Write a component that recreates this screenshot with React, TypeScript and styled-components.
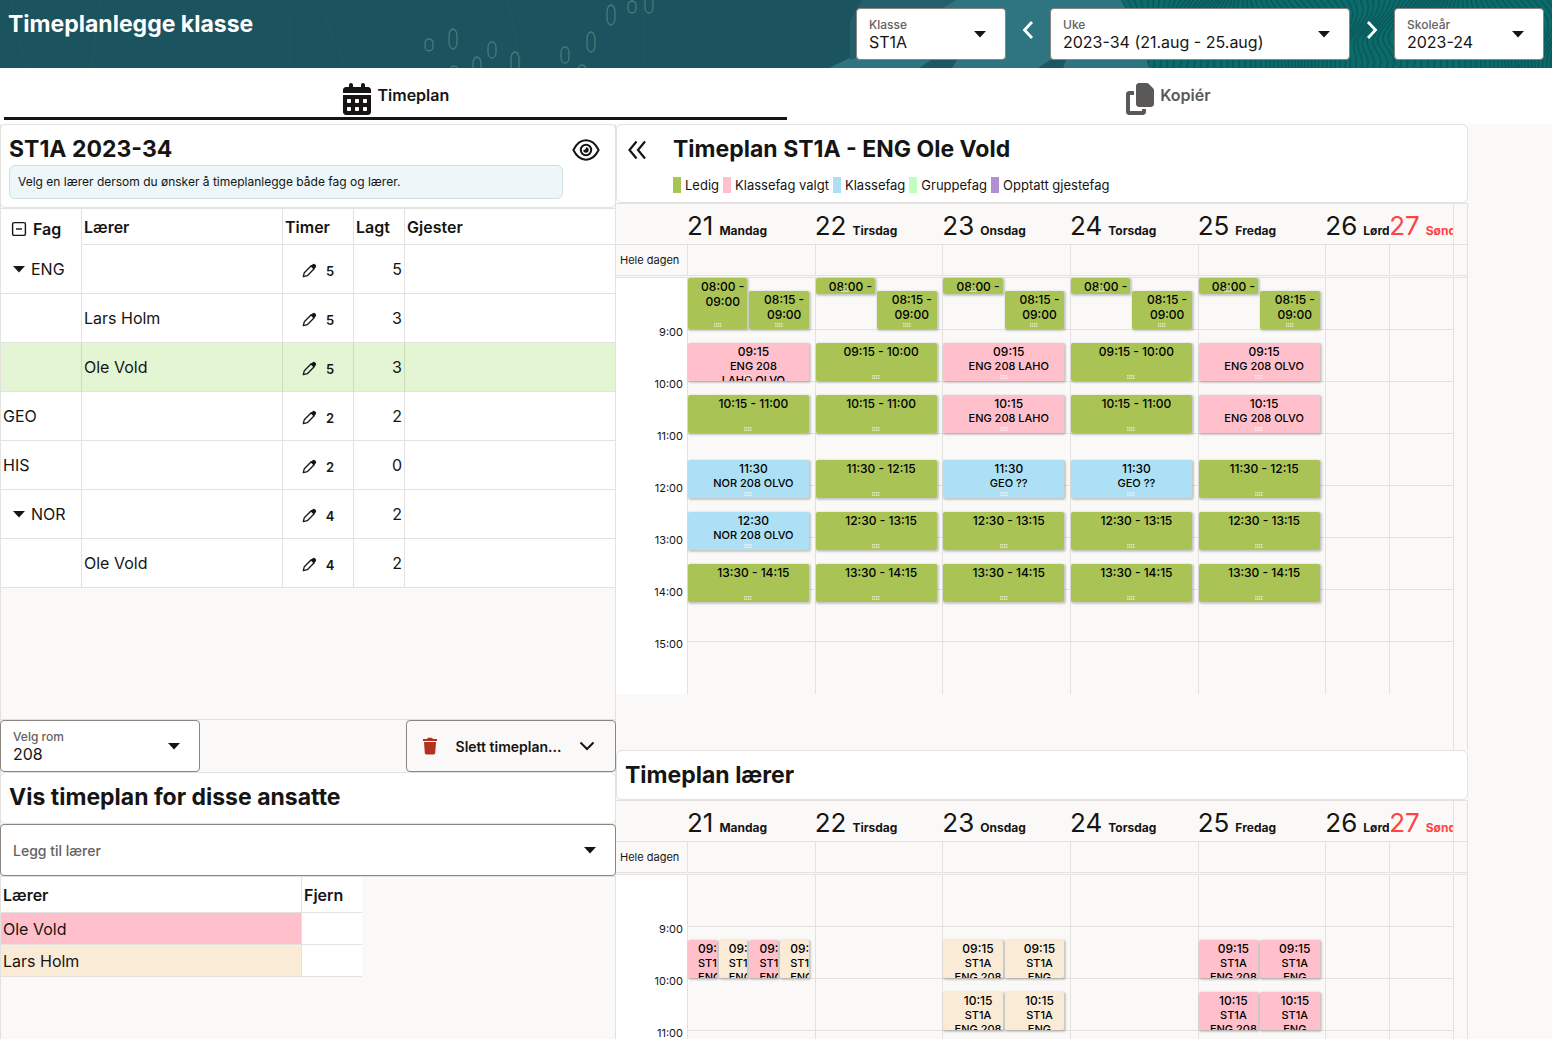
import React, { useId, useState } from "react";
import styled, { createGlobalStyle, css } from "styled-components";
import { FaCalendarDays, FaCopy } from "react-icons/fa6";

const ink = "#161513";
const line = "#e3e2e1";
const surface = "#faf9f8";

const palette = {
  free: "#a9c455",
  selected: "#ffc0cb",
  lesson: "#aee0f5",
  group: "#c1ffc1",
  guest: "#b08fd3",
  teacher: "#faebd7",
};
type Kind = keyof typeof palette;

const GlobalStyle = createGlobalStyle`
  *, *::before, *::after { box-sizing: border-box; }
  body {
    margin: 0;
    background: ${surface};
    color: ${ink};
    font-family: Inter, "Liberation Sans", sans-serif;
    font-size: 16px;
  }
  button, select { font: inherit; color: inherit; }
  h1, h2 { margin: 0; }
`;

/* ---------- page frame ---------- */

const Page = styled.div`
  display: flex;
  flex-direction: column;
  height: 100vh;
  overflow: hidden;
`;

const Banner = styled.header`
  display: grid;
  flex: none;
  background: #1b535e;
  overflow: hidden;
  > * {
    grid-area: 1 / 1;
  }
`;

const BannerArt = styled.svg`
  width: 100%;
  height: 68px;
  display: block;
`;

const BannerContent = styled.div`
  display: flex;
  justify-content: space-between;
  align-items: flex-start;
  padding: 8px;
`;

const PageTitle = styled.h1`
  color: #fff;
  font-size: 23px;
  line-height: 32px;
  font-weight: 700;
`;

const Filters = styled.div`
  display: flex;
  align-items: stretch;
`;

const StepButton = styled.button`
  width: 44px;
  height: 44px;
  padding: 0;
  border: 0;
  background: none;
  color: #fff;
  display: grid;
  place-items: center;
`;

const FieldBox = styled.div<{ $width?: string }>`
  display: grid;
  width: ${(p) => p.$width ?? "100%"};
  height: 52px;
  flex: none;
  background: #fff;
  border: 1px solid #8b8580;
  border-radius: 4px;
  > * {
    grid-area: 1 / 1;
  }
  > svg {
    justify-self: end;
    align-self: center;
    margin-right: 19px;
    pointer-events: none;
  }
`;

const FieldLabel = styled.label`
  padding: 8px 12px 0;
  font-size: 12px;
  line-height: 16px;
  font-weight: 500;
  color: #65625f;
  pointer-events: none;
  z-index: 1;
`;

const FieldSelect = styled.select<{ $placeholder?: boolean }>`
  appearance: none;
  width: 100%;
  border: 0;
  background: none;
  border-radius: 4px;
  padding: ${(p) => (p.$placeholder ? "0 12px" : "16px 12px 0")};
  font-size: ${(p) => (p.$placeholder ? 14 : 16)}px;
  font-weight: ${(p) => (p.$placeholder ? 500 : 400)};
  color: ${(p) => (p.$placeholder ? "#65625f" : ink)};
`;

const Tabs = styled.nav`
  display: flex;
  flex: none;
  background: #fff;
  padding: 0 4px 4px;
`;

const Tab = styled.button<{ $active?: boolean }>`
  flex: 1 1 auto;
  display: flex;
  justify-content: center;
  align-items: center;
  gap: 4px;
  height: 52px;
  padding: 12px 0 0;
  border: 0;
  border-bottom: 3px solid ${(p) => (p.$active ? ink : "transparent")};
  background: none;
  color: ${(p) => (p.$active ? ink : "#5b5957")};
  font-weight: 600;
  span {
    padding-bottom: 8px;
  }
`;

const Workspace = styled.main`
  display: flex;
  flex: 1;
  min-height: 0;
`;

const SubjectColumn = styled.section`
  width: 616px;
  flex: none;
  display: flex;
  flex-direction: column;
  border-left: 1px solid ${line};
  border-right: 1px solid ${line};
`;

const CalendarColumn = styled.section`
  width: 852px;
  flex: none;
  display: flex;
  flex-direction: column;
  min-height: 0;
`;

const Card = styled.div<{ $height: number }>`
  flex: none;
  height: ${(p) => p.$height}px;
  background: #fff;
  border: 1px solid ${line};
  border-radius: 6px;
  padding: 8px;
`;

const CardTitle = styled.h2`
  font-size: 23px;
  line-height: 32px;
  font-weight: 700;
`;

/* ---------- left column ---------- */

const SubjectCard = styled(Card)`
  margin: 0 -1px;
`;

const TitleRow = styled.div`
  display: flex;
  justify-content: space-between;
  align-items: center;
  padding-right: 7px;
`;

const IconButton = styled.button`
  padding: 2px 0 0;
  border: 0;
  background: none;
  display: grid;
  place-items: center;
`;

const Hint = styled.p`
  margin: 0 44px 0 0;
  padding: 8px;
  border: 1px solid #cfdfe3;
  border-radius: 6px;
  background: #edf6f9;
  font-size: 12px;
  line-height: 16px;
`;

const TableArea = styled.div`
  flex: none;
  height: 512px;
  border-top: 1px solid ${line};
  border-bottom: 1px solid ${line};
`;

const TeacherArea = styled.div`
  border-top: 1px solid ${line};
`;

const Table = styled.table<{ $width: string }>`
  width: ${(p) => p.$width};
  border-collapse: separate;
  border-spacing: 0;
  table-layout: fixed;
  background: #fff;
`;

const cell = css`
  border-right: 1px solid ${line};
  border-bottom: 1px solid ${line};
  padding: 0 2px;
  text-align: left;
  &:last-child {
    border-right: 0;
  }
`;

const Th = styled.th<{ $w?: number; $open?: boolean }>`
  ${cell}
  width: ${(p) => (p.$w ? `${p.$w}px` : "auto")};
  height: 36px;
  font-weight: 600;
  ${(p) => p.$open && "border-bottom-color: transparent;"}
`;

const Td = styled.td<{ $align?: string; $bg?: string; $height?: number }>`
  ${cell}
  height: ${(p) => p.$height ?? 49}px;
  text-align: ${(p) => p.$align ?? "left"};
  background: ${(p) => p.$bg ?? "transparent"};
`;

const Tr = styled.tr<{ $selected?: boolean }>`
  ${(p) => p.$selected && "background: #e3f5d3;"}
  ${(p) => p.$selected && "td { border-color: #cbdcbc; border-bottom-color: #e3e2e1; }"}
`;

const TreeButton = styled.button<{ $head?: boolean }>`
  display: flex;
  align-items: center;
  gap: 6px;
  padding: ${(p) => (p.$head ? "4px 0 0 8px" : "0 0 0 10px")};
  border: 0;
  background: none;
  font-weight: inherit;
`;

const HoursButton = styled.button`
  display: inline-flex;
  align-items: center;
  gap: 9px;
  padding: 0;
  border: 0;
  background: none;
  font-size: 13px;
  font-weight: 600;
  vertical-align: middle;
`;

const RoomRow = styled.div`
  display: flex;
  justify-content: space-between;
  margin: 0 -1px;
`;

const DeleteButton = styled.button`
  display: flex;
  align-items: center;
  width: 210px;
  height: 52px;
  padding: 0 20px 0 15px;
  gap: 12px;
  border: 1px solid #8b8580;
  border-radius: 4px;
  background: ${surface};
  font-size: 14px;
  font-weight: 600;
  span {
    flex: 1;
  }
`;

const AddTeacher = styled.div`
  margin: 0 -1px;
`;

/* ---------- calendars ---------- */

const TimetableHead = styled.div`
  display: flex;
  gap: 25px;
  padding-left: 1px;
`;

const CollapseButton = styled(IconButton)`
  width: 22px;
  height: 32px;
`;

const Legend = styled.ul`
  display: flex;
  gap: 4px;
  list-style: none;
  margin: 10px 0 0;
  padding: 0 0 0 48px;
  font-size: 13px;
  line-height: 20px;
`;

const LegendItem = styled.li<{ $color: string }>`
  display: flex;
  align-items: center;
  gap: 4px;
  &::before {
    content: "";
    width: 8px;
    height: 16px;
    background: ${(p) => p.$color};
  }
`;

const Calendar = styled.div<{ $height?: number }>`
  display: flex;
  flex-direction: column;
  ${(p) => (p.$height ? `flex: none; height: ${p.$height}px;` : "flex: 1 0 auto;")}
  border-top: 1px solid ${line};
  border-right: 1px solid ${line};
`;

const columns = css`
  display: grid;
  grid-template-columns: 71px repeat(5, minmax(0, 2fr)) repeat(2, minmax(0, 1fr)) 14px;
`;

const DayHeads = styled.div`
  ${columns}
  height: 41px;
  border-bottom: 1px solid ${line};
`;

const DayHead = styled.div<{ $holiday?: boolean }>`
  display: flex;
  align-items: baseline;
  gap: 6px;
  overflow: hidden;
  white-space: nowrap;
  font-size: 12px;
  font-weight: 700;
  line-height: 40px;
  padding-top: 2px;
  color: ${(p) => (p.$holiday ? "#ff4343" : ink)};
  b {
    font-size: 26px;
    font-weight: 400;
  }
`;

const Gutter = styled.div`
  border-left: 1px solid ${line};
`;

const AllDay = styled.div`
  ${columns}
  height: 31px;
  border-bottom: 1px solid ${line};
`;

const AllDayLabel = styled.div`
  padding-left: 4px;
  font-size: 11px;
  line-height: 30px;
`;

const AllDayCell = styled.div`
  border-left: 1px solid ${line};
`;

const Hours = styled.div`
  ${columns}
  flex: 1;
  margin-top: 1px;
  border-top: 1px solid ${line};
`;

const TimeScale = styled.div`
  align-self: start;
  height: 416px;
  padding: 28px 4px 0 0;
  background: #fff;
  font-size: 11px;
  line-height: 52px;
  text-align: right;
`;

const DayColumn = styled.div`
  position: relative;
  height: 416px;
  background: repeating-linear-gradient(transparent 0 51px, ${line} 51px 52px);
  background-size: 100% 364px;
  background-repeat: no-repeat;
  border-left: 1px solid ${line};
`;

const EventBox = styled.div<{ $kind: Kind }>`
  position: absolute;
  overflow: hidden;
  border-radius: 2px;
  background: ${(p) => palette[p.$kind]};
  box-shadow: 1px 1px 2px 1px rgba(0, 0, 0, 0.2);
  color: #000;
  padding: 1px 0 0 10px;
  text-align: center;
  white-space: nowrap;
  font-size: 11px;
  line-height: 14px;
  font-weight: 500;
  svg {
    position: absolute;
    bottom: 2px;
    left: calc(50% - 4px);
  }
`;

const EventTime = styled.div`
  font-size: 12px;
  line-height: 15px;
`;

/* ---------- drawings ---------- */

const Caret = () => (
  <svg width="12" height="7" viewBox="0 0 12 7" aria-hidden="true">
    <path d="M0 0h12L6 6.6z" fill={ink} />
  </svg>
);

const Pencil = () => (
  <svg width="15" height="15" viewBox="0 0 15 15" aria-hidden="true">
    <path d="M1.3 13.7l1-4L9.2 2.8l3 3-6.9 6.9z" fill="none" stroke={ink} strokeWidth="1.3" strokeLinejoin="round" />
    <path d="M8.7 3.3l2-2a1.6 1.6 0 0 1 2.2 0l.8.8a1.6 1.6 0 0 1 0 2.2l-2 2z" fill={ink} />
  </svg>
);

const Eye = () => (
  <svg width="28" height="22" viewBox="0 0 28 22" fill="none" stroke={ink} aria-hidden="true">
    <path d="M1.4 11C4.5 4.6 9 1.3 14 1.3S23.500 4.6 26.6 11C23.500 17.4 19 20.7 14 20.7S4.500 17.4 1.4 11z" strokeWidth="2" strokeLinejoin="round" />
    <circle cx="14" cy="11" r="5.2" strokeWidth="2" />
    <path d="M14 8.3a2.700 2.700 0 1 1-2.700 2.700c1.600.2 2.900-1.100 2.700-2.700z" fill={ink} stroke="none" />
  </svg>
);

const DoubleChevron = () => (
  <svg width="20" height="20" viewBox="0 0 20 20" fill="none" stroke={ink} strokeWidth="2.2" aria-hidden="true">
    <path d="M9.500 1.500L2.500 10l7 8.500M18 1.500L11 10l7 8.500" />
  </svg>
);

const StepIcon = ({ forward }: { forward?: boolean }) => (
  <svg width="12" height="18" viewBox="0 0 12 18" fill="none" stroke="#fff" strokeWidth="2.8" aria-hidden="true">
    <path d={forward ? "M2 1l7.500 8L2 17" : "M10 1L2.500 9l7.500 8"} />
  </svg>
);

const Trash = () => (
  <svg width="16" height="18" viewBox="0 0 16 18" fill="#b3311f" aria-hidden="true">
    <path d="M1 2h4l1-1.3h4L11 2h4v2H1zM2 5h12l-.8 11a1.500 1.500 0 0 1-1.500 1.400H4.300A1.500 1.500 0 0 1 2.800 16z" />
  </svg>
);

const ChevronDown = () => (
  <svg width="16" height="10" viewBox="0 0 16 10" fill="none" stroke={ink} strokeWidth="2" aria-hidden="true">
    <path d="M1.500 1.500L8 8l6.500-6.500" />
  </svg>
);

const CollapseIcon = () => (
  <svg width="16" height="16" viewBox="0 0 16 16" fill="none" stroke={ink} strokeWidth="1.4" aria-hidden="true">
    <rect x="1.600" y="1.600" width="12.800" height="12.800" rx="1.500" />
    <path d="M5 8h6" />
  </svg>
);

const Grip = () => (
  <svg width="8" height="4" viewBox="0 0 8 4" fill="#fff" fillOpacity="0.6" aria-hidden="true">
    {[0, 2, 4, 6].map((x) => [0, 1.500, 3].map((y) => <rect key={`${x}-${y}`} x={x} y={y} width="1.5" height="1" />))}
  </svg>
);

const rings = [
  [429, 45, 4, 6], [453, 39, 4, 10], [492, 50, 4, 8], [477, 67, 4, 10], [515, 62, 4, 10],
  [454, 73, 4, 7], [565, 55, 4, 8], [591, 42, 4, 10], [582, 72, 4, 7], [611, 15, 4, 10],
  [632, 7, 4, 6], [649, 5, 4, 8],
];

/* One height line of the topographic pattern, bending with its place in the series. */
const contour = (i: number) => {
  const x = 1118 + i * 5;
  const bend = (k: number) => Math.round(14 * Math.sin(i / 7 + k));
  return `M${x + bend(0)} -4C${x + bend(1)} 12 ${x + bend(2)} 20 ${x + bend(3)} 34S${x + bend(5)} 56 ${x + bend(4)} 72`;
};

const BannerDrawing = () => (
  <BannerArt viewBox="0 0 1552 68" preserveAspectRatio="xMaxYMid slice" aria-hidden="true">
    <defs>
      <clipPath id="terrain">
        <path d="M1121 0c12 22 22 44 28 68h403V0z" />
      </clipPath>
    </defs>
    <rect width="1552" height="68" fill="#1b535e" />
    <g stroke="#2a6a70" strokeOpacity="0.35" fill="none">
      <path d="M10 0l16 68M100 0l-8 68M318 0l28 68M508 0l14 68M643 0v68M290 10v58" />
    </g>
    <g fill="none" stroke="#4a857f" strokeOpacity="0.85" strokeWidth="1.3">
      {rings.map(([cx, cy, rx, ry]) => (
        <rect key={`${cx}-${cy}`} x={cx - rx} y={cy - ry} width={rx * 2} height={ry * 2} rx={rx} ry={ry * 0.7} />
      ))}
    </g>
    <path d="M829 68L862 52V0h288v68z" fill="#2f7581" />
    <path d="M850 0h106L872 52 850 60z" fill="#235f6b" />
    <path d="M850 0h12l-12 20z" fill="#1b535e" />
    <path d="M919 68l12-8h26l-5 8zM1038 68l12-8h16l-3 8z" fill="#1d5763" />
    <path d="M1121 0c12 22 22 44 28 68h403V0z" fill="#0b6b6b" />
    <g fill="none" stroke="#0a5759" strokeWidth="1.4" clipPath="url(#terrain)">
      {Array.from({ length: 92 }, (_, i) => (
        <path key={i} d={contour(i)} />
      ))}
    </g>
  </BannerArt>
);

/* ---------- parts ---------- */

const Field = ({ label, options, width }: { label: string; options: string[]; width: string }) => {
  const id = useId();
  return (
    <FieldBox $width={width}>
      <FieldLabel htmlFor={id}>{label}</FieldLabel>
      <FieldSelect id={id}>
        {options.map((o) => (
          <option key={o}>{o}</option>
        ))}
      </FieldSelect>
      <Caret />
    </FieldBox>
  );
};

interface Lesson {
  day: number;
  from: string;
  to: string;
  kind: Kind;
  lines: string[];
  lane?: number;
  lanes?: number;
}

const minutes = (t: string) => {
  const [h, m] = t.split(":").map(Number);
  return h * 60 + m;
};

const free = (day: number, from: string, to: string): Lesson => ({
  day, from, to, kind: "free", lines: [`${from} - ${to}`],
});

const classLessons: Lesson[] = [
  ...[0, 1, 2, 3, 4].flatMap((day): Lesson[] => [
    { day, from: "08:00", to: day === 0 ? "09:00" : "08:15", kind: "free", lines: ["08:00 -", "09:00"], lane: 0, lanes: 2 },
    { day, from: "08:15", to: "09:00", kind: "free", lines: ["08:15 -", "09:00"], lane: 1, lanes: 2 },
    free(day, "13:30", "14:15"),
  ]),
  { day: 0, from: "09:15", to: "10:00", kind: "selected", lines: ["09:15", "ENG 208", "LAHO OLVO"] },
  free(0, "10:15", "11:00"),
  { day: 0, from: "11:30", to: "12:15", kind: "lesson", lines: ["11:30", "NOR 208 OLVO"] },
  { day: 0, from: "12:30", to: "13:15", kind: "lesson", lines: ["12:30", "NOR 208 OLVO"] },
  free(1, "09:15", "10:00"),
  free(1, "10:15", "11:00"),
  free(1, "11:30", "12:15"),
  free(1, "12:30", "13:15"),
  { day: 2, from: "09:15", to: "10:00", kind: "selected", lines: ["09:15", "ENG 208 LAHO"] },
  { day: 2, from: "10:15", to: "11:00", kind: "selected", lines: ["10:15", "ENG 208 LAHO"] },
  { day: 2, from: "11:30", to: "12:15", kind: "lesson", lines: ["11:30", "GEO ??"] },
  free(2, "12:30", "13:15"),
  free(3, "09:15", "10:00"),
  free(3, "10:15", "11:00"),
  { day: 3, from: "11:30", to: "12:15", kind: "lesson", lines: ["11:30", "GEO ??"] },
  free(3, "12:30", "13:15"),
  { day: 4, from: "09:15", to: "10:00", kind: "selected", lines: ["09:15", "ENG 208 OLVO"] },
  { day: 4, from: "10:15", to: "11:00", kind: "selected", lines: ["10:15", "ENG 208 OLVO"] },
  free(4, "11:30", "12:15"),
  free(4, "12:30", "13:15"),
];

const pair = (day: number, from: string, to: string, kind: Kind): Lesson[] => [
  { day, from, to, kind, lines: [from, "ST1A", "ENG 208"], lane: 0, lanes: 2 },
  { day, from, to, kind, lines: [from, "ST1A", "ENG"], lane: 1, lanes: 2 },
];

const teacherLessons: Lesson[] = [
  ...[0, 1, 2, 3].map((lane): Lesson => ({
    day: 0, from: "09:15", to: "10:00", kind: lane % 2 ? "teacher" : "selected",
    lines: ["09:15", "ST1A", "ENG"], lane, lanes: 4,
  })),
  ...pair(2, "09:15", "10:00", "teacher"),
  ...pair(2, "10:15", "11:00", "teacher"),
  ...pair(4, "09:15", "10:00", "selected"),
  ...pair(4, "10:15", "11:00", "selected"),
];

const days = ["Mandag", "Tirsdag", "Onsdag", "Torsdag", "Fredag", "Lørdag", "Søndag"];

const Lessons = ({ items, grip }: { items: Lesson[]; grip?: boolean }) => (
  <>
    {items.map((l) => {
      const top = ((minutes(l.from) - 480) / 60) * 52;
      const height = Math.max(16, ((minutes(l.to) - minutes(l.from)) / 60) * 52 - 1);
      const lanes = l.lanes ?? 1;
      const share = 97 / lanes;
      const left = (l.lane ?? 0) * share;
      return (
        <EventBox
          key={`${l.from}-${l.lane ?? 0}`}
          $kind={l.kind}
          style={{ top, height, left: `${left}%`, width: `calc(${share}% - 2px)` }}
        >
          {l.lines.map((text, i) =>
            i === 0 || l.kind === "free" ? <EventTime key={i}>{text}</EventTime> : <div key={i}>{text}</div>
          )}
          {grip && <Grip />}
        </EventBox>
      );
    })}
  </>
);

const WeekCalendar = ({ lessons, height, grip }: { lessons: Lesson[]; height?: number; grip?: boolean }) => (
  <Calendar $height={height}>
    <DayHeads>
      <div />
      {days.map((name, i) => (
        <DayHead key={name} $holiday={i === 6}>
          <b>{21 + i}</b>
          {name}
        </DayHead>
      ))}
      <Gutter />
    </DayHeads>
    <AllDay>
      <AllDayLabel>Hele dagen</AllDayLabel>
      {days.map((name) => (
        <AllDayCell key={name} />
      ))}
      <Gutter />
    </AllDay>
    <Hours>
      <TimeScale>
        {[9, 10, 11, 12, 13, 14, 15].map((h) => (
          <div key={h}>{h}:00</div>
        ))}
      </TimeScale>
      {days.map((name, i) => (
        <DayColumn key={name}>
          <Lessons items={lessons.filter((l) => l.day === i)} grip={grip} />
        </DayColumn>
      ))}
      <Gutter />
    </Hours>
  </Calendar>
);

const subjectRows = [
  { subject: "ENG", group: true, teacher: "", hours: 5, placed: 5 },
  { subject: "", teacher: "Lars Holm", hours: 5, placed: 3 },
  { subject: "", teacher: "Ole Vold", hours: 5, placed: 3, selected: true },
  { subject: "GEO", teacher: "", hours: 2, placed: 2 },
  { subject: "HIS", teacher: "", hours: 2, placed: 0 },
  { subject: "NOR", group: true, teacher: "", hours: 4, placed: 2 },
  { subject: "", teacher: "Ole Vold", hours: 4, placed: 2 },
];

export default function App() {
  const [tab, setTab] = useState("plan");
  return (
    <>
      <GlobalStyle />
      <Page>
        <Banner>
          <BannerDrawing />
          <BannerContent>
            <PageTitle>Timeplanlegge klasse</PageTitle>
            <Filters>
              <Field label="Klasse" options={["ST1A"]} width="150px" />
              <StepButton aria-label="Forrige uke">
                <StepIcon />
              </StepButton>
              <Field label="Uke" options={["2023-34 (21.aug - 25.aug)"]} width="300px" />
              <StepButton aria-label="Neste uke">
                <StepIcon forward />
              </StepButton>
              <Field label="Skoleår" options={["2023-24"]} width="150px" />
            </Filters>
          </BannerContent>
        </Banner>
        <Tabs>
          <Tab $active={tab === "plan"} onClick={() => setTab("plan")}>
            <FaCalendarDays width={28} size={32} />
            <span>Timeplan</span>
          </Tab>
          <Tab $active={tab === "copy"} onClick={() => setTab("copy")}>
            <FaCopy size={32} />
            <span>Kopiér</span>
          </Tab>
        </Tabs>
        <Workspace>
          <SubjectColumn>
            <SubjectCard $height={84}>
              <TitleRow>
                <CardTitle>ST1A 2023-34</CardTitle>
                <IconButton aria-label="Vis">
                  <Eye />
                </IconButton>
              </TitleRow>
              <Hint>Velg en lærer dersom du ønsker å timeplanlegge både fag og lærer.</Hint>
            </SubjectCard>
            <TableArea>
              <Table $width="100%">
                <thead>
                  <tr>
                    <Th $w={81} $open>
                      <TreeButton $head>
                        <CollapseIcon />
                        Fag
                      </TreeButton>
                    </Th>
                    <Th $w={201}>Lærer</Th>
                    <Th $w={71}>Timer</Th>
                    <Th $w={51}>Lagt</Th>
                    <Th>Gjester</Th>
                  </tr>
                </thead>
                <tbody>
                  {subjectRows.map((r, i) => (
                    <Tr key={i} $selected={r.selected}>
                      <Td>
                        {r.group ? (
                          <TreeButton>
                            <Caret />
                            {r.subject}
                          </TreeButton>
                        ) : (
                          r.subject
                        )}
                      </Td>
                      <Td>{r.teacher}</Td>
                      <Td $align="center">
                        <HoursButton>
                          <Pencil />
                          {r.hours}
                        </HoursButton>
                      </Td>
                      <Td $align="right">{r.placed}</Td>
                      <Td />
                    </Tr>
                  ))}
                </tbody>
              </Table>
            </TableArea>
            <RoomRow>
              <Field label="Velg rom" options={["208"]} width="200px" />
              <DeleteButton>
                <Trash />
                <span>Slett timeplan...</span>
                <ChevronDown />
              </DeleteButton>
            </RoomRow>
            <SubjectCard $height={52}>
              <CardTitle>Vis timeplan for disse ansatte</CardTitle>
            </SubjectCard>
            <AddTeacher>
              <FieldBox>
                <FieldSelect $placeholder aria-label="Legg til lærer">
                  <option>Legg til lærer</option>
                </FieldSelect>
                <Caret />
              </FieldBox>
            </AddTeacher>
            <TeacherArea>
              <Table $width="361px">
                <thead>
                  <tr>
                    <Th $w={301}>Lærer</Th>
                    <Th $w={60}>Fjern</Th>
                  </tr>
                </thead>
                <tbody>
                  <tr>
                    <Td $height={32} $bg={palette.selected}>Ole Vold</Td>
                    <Td $height={32} />
                  </tr>
                  <tr>
                    <Td $height={32} $bg={palette.teacher}>Lars Holm</Td>
                    <Td $height={32} />
                  </tr>
                </tbody>
              </Table>
            </TeacherArea>
          </SubjectColumn>
          <CalendarColumn>
            <Card $height={79}>
              <TimetableHead>
                <CollapseButton aria-label="Skjul panel">
                  <DoubleChevron />
                </CollapseButton>
                <CardTitle>Timeplan ST1A - ENG Ole Vold</CardTitle>
              </TimetableHead>
              <Legend>
                <LegendItem $color={palette.free}>Ledig</LegendItem>
                <LegendItem $color={palette.selected}>Klassefag valgt</LegendItem>
                <LegendItem $color={palette.lesson}>Klassefag</LegendItem>
                <LegendItem $color={palette.group}>Gruppefag</LegendItem>
                <LegendItem $color={palette.guest}>Opptatt gjestefag</LegendItem>
              </Legend>
            </Card>
            <WeekCalendar lessons={classLessons} height={547} grip />
            <Card $height={50}>
              <CardTitle>Timeplan lærer</CardTitle>
            </Card>
            <WeekCalendar lessons={teacherLessons} />
          </CalendarColumn>
        </Workspace>
      </Page>
    </>
  );
}
